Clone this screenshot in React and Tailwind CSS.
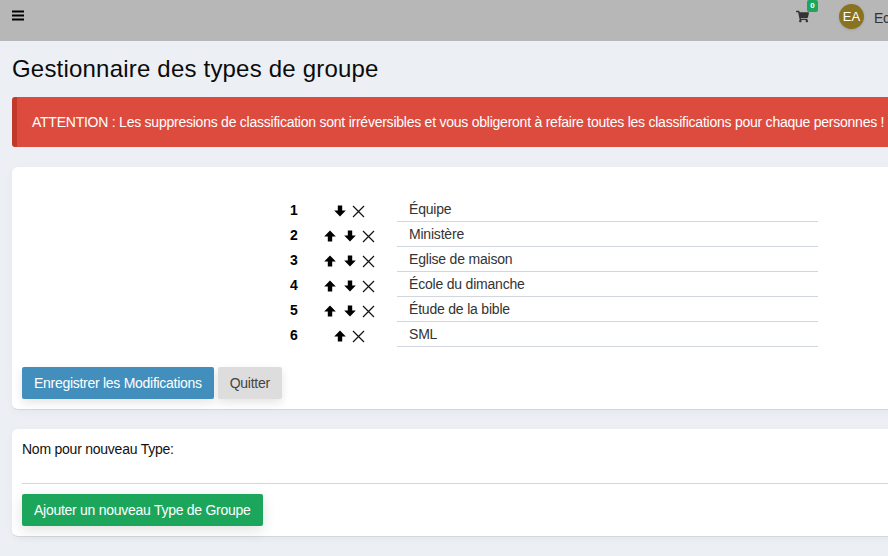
import { FaShoppingCart } from "react-icons/fa";

const rows = [
  { id: 1, name: "Équipe", up: false, down: true },
  { id: 2, name: "Ministère", up: true, down: true },
  { id: 3, name: "Eglise de maison", up: true, down: true },
  { id: 4, name: "École du dimanche", up: true, down: true },
  { id: 5, name: "Étude de la bible", up: true, down: true },
  { id: 6, name: "SML", up: true, down: false },
];

function Cross() {
  return (
    <svg width="13" height="13" viewBox="0 0 13 13" className="shrink-0 -ml-[2px]">
      <path d="M1 1 L12 12 M12 1 L1 12" stroke="#111" strokeWidth="1.2" fill="none" />
    </svg>
  );
}

function Arrow({ down }) {
  return (
    <svg width="12" height="12" viewBox="0 0 12 12" className={down ? "shrink-0 rotate-180" : "shrink-0"}>
      <path d="M6 0.5 L11.8 6.5 L8.2 6.5 L8.2 11.5 L3.8 11.5 L3.8 6.5 L0.2 6.5 Z" fill="#000" />
    </svg>
  );
}

function Bars() {
  return (
    <svg width="12" height="11" viewBox="0 0 12 11" className="ml-3 mt-[10px]">
      <path d="M0 0.5 H12 V2.5 H0 Z M0 4.5 H12 V6.5 H0 Z M0 8.5 H12 V10.5 H0 Z" fill="#000" />
    </svg>
  );
}

export default function App() {
  return (
    <div className="w-[888px] h-[556px] overflow-hidden bg-[#ecf0f5] font-['Liberation_Sans',Arial,sans-serif] text-[14px] tracking-[-0.24px]">
      <div className="w-[1200px]">
        <header className="h-[41px] bg-[#b7b7b7] flex items-start">
          <Bars />
          <div className="ml-[772px] relative mt-[10px]">
            <FaShoppingCart className="text-[13px] text-[#333]" />
            <span className="absolute left-[11px] top-[-10px] w-[11px] h-[12px] rounded-[2px] bg-[#1ca65c] text-white text-[8px] font-bold tracking-normal flex items-center justify-center">0</span>
          </div>
          <div className="ml-[30px] mt-1 w-[25px] h-[25px] rounded-full bg-[#8a7320] text-white text-[13px] tracking-normal flex items-center justify-center shadow-sm">EA</div>
          <span className="ml-[10px] mt-[8px] text-[#333]">Ecole</span>
        </header>

        <main className="px-3">
          <h1 className="text-[24px] tracking-[0.2px] leading-[27px] mt-[14px] text-[#0b0b0b]">Gestionnaire des types de groupe</h1>

          <div className="mt-[15px] h-[50px] rounded-[3px] bg-[#dd4b3f] border-l-[5px] border-[#c0392b] text-white flex items-center pl-[15px]">
            ATTENTION : Les suppresions de classification sont irréversibles et vous obligeront à refaire toutes les classifications pour chaque personnes !
          </div>

          <section className="mt-5 h-[243px] rounded-[6px] bg-white border-b border-[#d2d6de] shadow-[0_2px_8px_rgba(0,0,0,0.04)] px-[10px] pt-[30px]">
            <div className="ml-[268px]">
              {rows.map((row) => (
                <div key={row.id} className="flex h-[25px]">
                  <div className="w-[23px] pt-[3px] font-bold text-black">{row.id}</div>
                  <div className="w-[83px] flex items-center justify-center gap-[8px] pt-[3px] pr-[10px]">
                    {row.up && <Arrow />}
                    {row.down && <Arrow down />}
                    <Cross />
                  </div>
                  <div className="w-[421px] ml-[1px] border-b border-[#d2d6de] pl-3 pt-[2px] text-[#333] tracking-[-0.2px]">{row.name}</div>
                </div>
              ))}
            </div>
            <div className="mt-[20px] flex gap-1">
              <button className="h-8 px-3 rounded-[2px] bg-[#428fbd] text-white tracking-[-0.28px] shadow-[0_4px_10px_rgba(0,0,0,0.1)]">Enregistrer les Modifications</button>
              <button className="h-8 px-3 rounded-[2px] bg-[#dddddd] text-[#444] tracking-[-0.28px] shadow-[0_4px_10px_rgba(0,0,0,0.1)]">Quitter</button>
            </div>
          </section>

          <section className="mt-[19px] h-[108px] rounded-[6px] bg-white border-b border-[#d2d6de] shadow-[0_2px_8px_rgba(0,0,0,0.04)] px-[10px] pt-[11px]">
            <div className="text-[#111] leading-[18px]">Nom pour nouveau Type:</div>
            <div className="mt-[25px] border-b border-[#d2d6de]"></div>
            <button className="mt-[10px] h-8 px-3 rounded-[2px] bg-[#1ca65c] text-white tracking-[-0.27px] shadow-[0_4px_14px_rgba(0,0,0,0.12)]">Ajouter un nouveau Type de Groupe</button>
          </section>
        </main>
      </div>
    </div>
  );
}
